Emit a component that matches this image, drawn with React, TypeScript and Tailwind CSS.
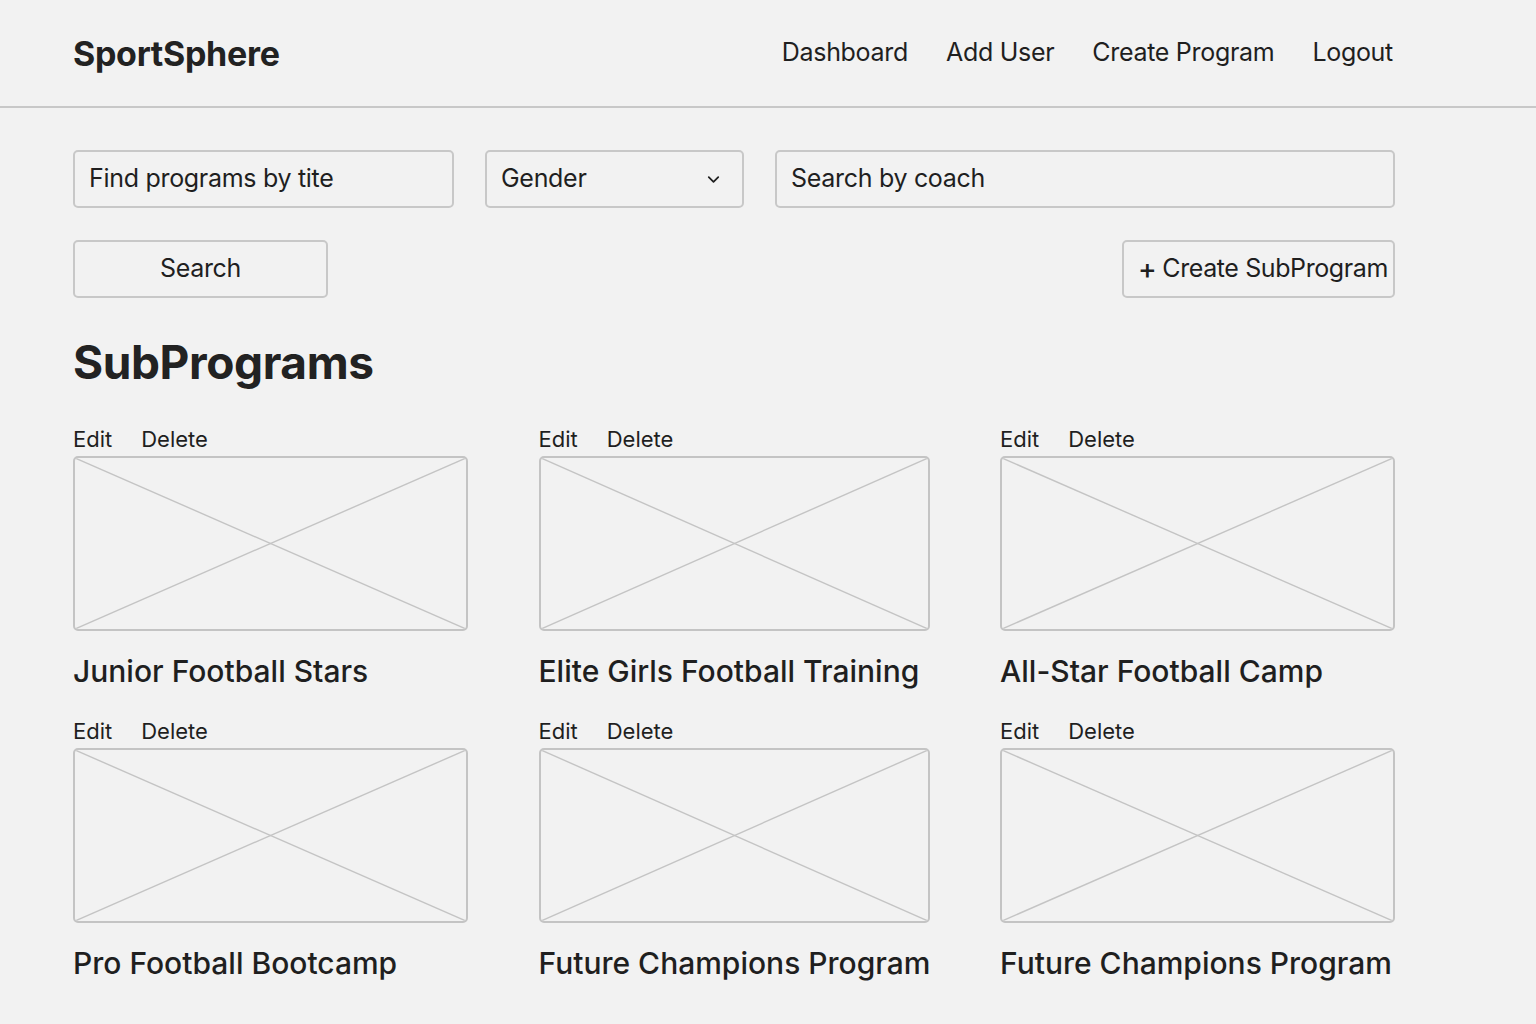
import { ChevronDown } from "lucide-react";

const programs = [
  "Junior Football Stars",
  "Elite Girls Football Training",
  "All-Star Football Camp",
  "Pro Football Bootcamp",
  "Future Champions Program",
  "Future Champions Program",
];

const navLinks = ["Dashboard", "Add User", "Create Program", "Logout"];

function Placeholder() {
  return (
    <div className="h-[175px] w-full rounded-[5px] border-2 border-[#c4c4c4] overflow-hidden">
      <svg className="h-full w-full" viewBox="0 0 100 100" preserveAspectRatio="none">
        <line x1="0" y1="0" x2="100" y2="100" stroke="#c4c4c4" strokeWidth="1.4" vectorEffect="non-scaling-stroke" />
        <line x1="100" y1="0" x2="0" y2="100" stroke="#c4c4c4" strokeWidth="1.4" vectorEffect="non-scaling-stroke" />
      </svg>
    </div>
  );
}

function ProgramCard({ title }: { title: string }) {
  return (
    <div className="flex flex-col">
      <div className="flex gap-[29px] text-[22px] leading-[34px] text-[#1f1f1f]">
        <button>Edit</button>
        <button>Delete</button>
      </div>
      <Placeholder />
      <h3 className="mt-[22px] text-[30px] leading-[36px] font-medium text-[#1f1f1f] whitespace-nowrap">
        {title}
      </h3>
    </div>
  );
}

export default function App() {
  return (
    <div className="min-h-screen bg-[#f2f2f2] font-['Inter',sans-serif] text-[#1f1f1f]">
      <header className="h-[108px] border-b-2 border-[#c8c8c8] flex items-center justify-between pl-[73px] pr-[143px]">
        <h1 className="text-[34px] font-bold tracking-[-0.3px] text-[#222]">SportSphere</h1>
        <nav className="flex gap-[38px] text-[25px] text-[#1f1f1f] tracking-[-0.3px]">
          {navLinks.map((l) => (
            <a key={l} href="#">
              {l}
            </a>
          ))}
        </nav>
      </header>

      <main className="w-[1322px] ml-[73px] pt-[42px]">
        <div className="flex gap-[31px]">
          <div className="w-[381px] h-[58px] rounded-[5px] border-2 border-[#c8c8c8] flex items-center px-[14px] text-[25px] tracking-[-0.3px]">
            Find programs by tite
          </div>
          <div className="w-[259px] h-[58px] rounded-[5px] border-2 border-[#c8c8c8] flex items-center justify-between pl-[14px] pr-[19px] text-[25px] tracking-[-0.3px]">
            <span>Gender</span>
            <ChevronDown size={19} strokeWidth={2.2} />
          </div>
          <div className="flex-1 h-[58px] rounded-[5px] border-2 border-[#c8c8c8] flex items-center px-[14px] text-[25px] tracking-[-0.3px]">
            Search by coach
          </div>
        </div>

        <div className="mt-[32px] flex justify-between">
          <button className="w-[255px] h-[58px] rounded-[5px] border-2 border-[#c8c8c8] text-[25px] tracking-[-0.3px]">
            Search
          </button>
          <button className="w-[273px] h-[58px] rounded-[5px] border-2 border-[#c8c8c8] text-[25px] tracking-[-0.4px] flex items-center gap-[6px] pl-[14px] whitespace-nowrap">
            <span className="text-[28px] leading-none font-medium">+</span>
            <span>Create SubProgram</span>
          </button>
        </div>

        <h2 className="mt-[36px] text-[46px] leading-[56px] font-bold tracking-[-0.4px] text-[#222]">SubPrograms</h2>

        <div className="mt-[32px] grid grid-cols-[395px_391px_395px] gap-x-[70.5px] gap-y-[25px]">
          {programs.map((p, i) => (
            <ProgramCard key={i} title={p} />
          ))}
        </div>
      </main>
    </div>
  );
}
